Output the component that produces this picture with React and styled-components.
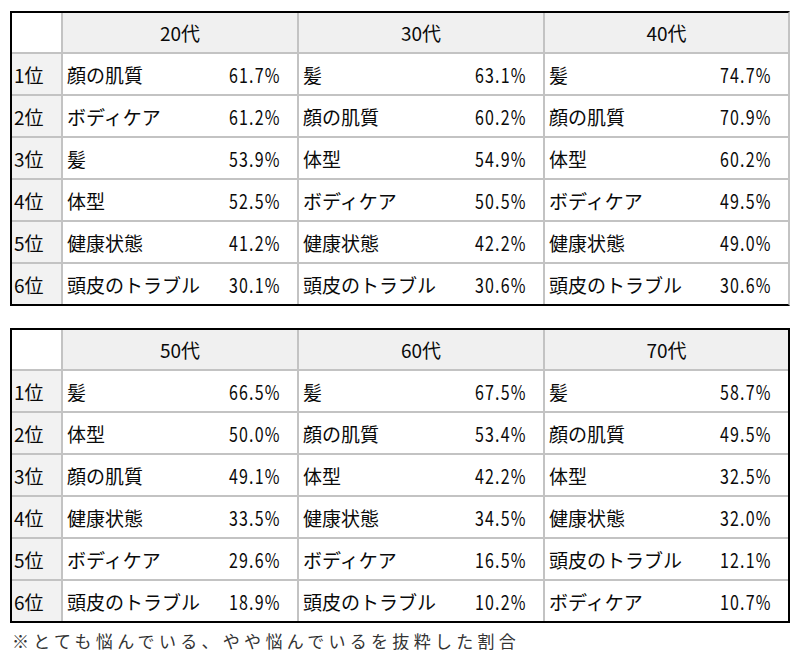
import React from 'react';
import styled, { createGlobalStyle } from 'styled-components';

const GlobalStyle = createGlobalStyle`
    html, body {
        background: #ffffff;
        margin: 0;
        padding: 0;
    }

    body {
        font-family: "Noto Sans CJK JP", "Noto Sans", sans-serif;
        color: #0a0a0a;
    }
`;

const Page = styled('div')`
    display: flex;
    flex-direction: column;
    gap: 22px;
    padding: 11px 0 0 10px;
    width: 780px;
`;

const Grid = styled('div')`
    background: #c3c3c3;
    border: 2px solid #000000;
    border-right-color: ${props => (props.softRight ? '#c3c3c3' : '#000000')};
    display: grid;
    gap: 2px;
    grid-template-columns: 49px 234px 244px 243px;
    grid-template-rows: 39px repeat(6, 40px);
`;

const Corner = styled('div')`
    background: #ffffff;
`;

const HeadCell = styled('div')`
    align-items: center;
    background: #f0f0f0;
    display: flex;
    font-size: 19px;
    justify-content: center;
`;

const RankCell = styled('div')`
    align-items: center;
    background: #f2f2f2;
    display: flex;
    font-size: 19px;
    padding-left: 2px;
`;

const ItemCell = styled('div')`
    align-items: center;
    background: #ffffff;
    display: flex;
    font-size: 19px;
    justify-content: space-between;
    padding: 0 16px 0 4px;
`;

// percentages are drawn narrow, like the condensed digits of the original
const Rate = styled('span')`
    display: inline-block;
    font-size: 20px;
    letter-spacing: 1.5px;
    transform: scaleX(0.8);
    transform-origin: right center;
`;

const Note = styled('div')`
    color: #333333;
    font-size: 17px;
    letter-spacing: 4.3px;
    margin-top: -17px;
    padding-left: 2px;
`;

const tables = [
    {
        softRight: true,
        ages: ['20代', '30代', '40代'],
        rows: [
            [['顔の肌質', '61.7%'], ['髪', '63.1%'], ['髪', '74.7%']],
            [['ボディケア', '61.2%'], ['顔の肌質', '60.2%'], ['顔の肌質', '70.9%']],
            [['髪', '53.9%'], ['体型', '54.9%'], ['体型', '60.2%']],
            [['体型', '52.5%'], ['ボディケア', '50.5%'], ['ボディケア', '49.5%']],
            [['健康状態', '41.2%'], ['健康状態', '42.2%'], ['健康状態', '49.0%']],
            [['頭皮のトラブル', '30.1%'], ['頭皮のトラブル', '30.6%'], ['頭皮のトラブル', '30.6%']],
        ],
    },
    {
        softRight: false,
        ages: ['50代', '60代', '70代'],
        rows: [
            [['髪', '66.5%'], ['髪', '67.5%'], ['髪', '58.7%']],
            [['体型', '50.0%'], ['顔の肌質', '53.4%'], ['顔の肌質', '49.5%']],
            [['顔の肌質', '49.1%'], ['体型', '42.2%'], ['体型', '32.5%']],
            [['健康状態', '33.5%'], ['健康状態', '34.5%'], ['健康状態', '32.0%']],
            [['ボディケア', '29.6%'], ['ボディケア', '16.5%'], ['頭皮のトラブル', '12.1%']],
            [['頭皮のトラブル', '18.9%'], ['頭皮のトラブル', '10.2%'], ['ボディケア', '10.7%']],
        ],
    },
];

const RankTable = ({ table }) => (
    <Grid softRight={table.softRight}>
        <Corner />
        {table.ages.map(age => <HeadCell key={age}>{age}</HeadCell>)}
        {table.rows.map((row, i) => (
            <React.Fragment key={i}>
                <RankCell>{`${i + 1}位`}</RankCell>
                {row.map(([item, rate], j) => (
                    <ItemCell key={j}>
                        <span>{item}</span>
                        <Rate>{rate}</Rate>
                    </ItemCell>
                ))}
            </React.Fragment>
        ))}
    </Grid>
);

export default function App() {
    return (
        <>
            <GlobalStyle />
            <Page>
                {tables.map((table, i) => <RankTable key={i} table={table} />)}
                <Note>※とても悩んでいる、やや悩んでいるを抜粋した割合</Note>
            </Page>
        </>
    );
}
